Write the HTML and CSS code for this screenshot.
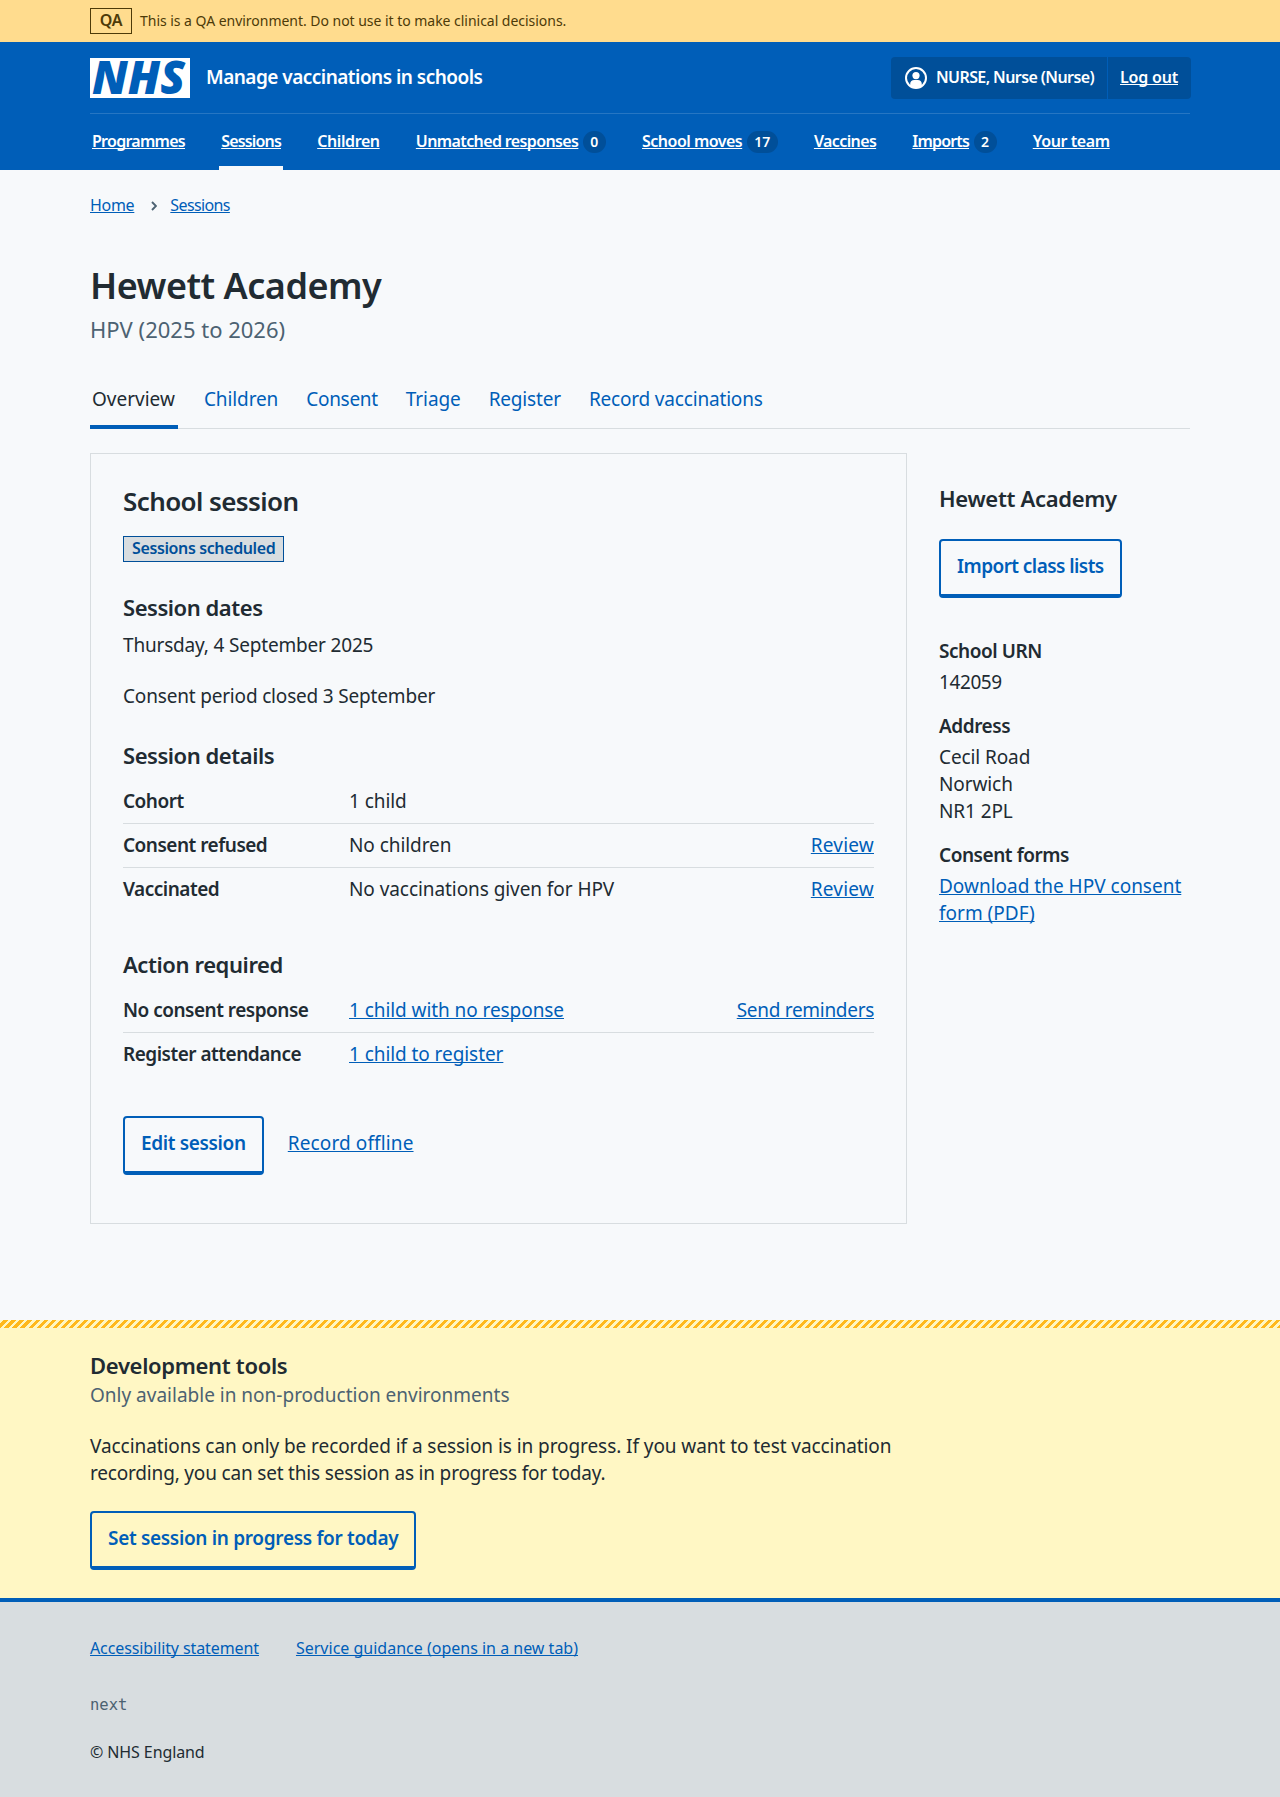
FILE: index.html
```html
<!DOCTYPE html>
<html lang="en">
<head>
<meta charset="utf-8">
<title>Hewett Academy – Manage vaccinations in schools</title>
<link rel="stylesheet" href="styles.css">
</head>
<body>
<div class="environment">
  <div class="container environment-inner">
    <strong class="environment-tag">QA</strong>
    <span>This is a QA environment. Do not use it to make clinical decisions.</span>
  </div>
</div>

<header class="header">
  <div class="container">
    <div class="header-top">
      <svg class="logo" width="100" height="40" viewBox="0 0 100 40" role="img" aria-label="NHS">
        <rect width="100" height="40" fill="#fff"/>
        <text class="logo-text" x="2" y="36.2" textLength="93" lengthAdjust="spacingAndGlyphs">NHS</text>
      </svg>
      <span class="service-name">Manage vaccinations in schools</span>
      <div class="account">
        <span class="account-item account-user">
          <svg width="22" height="22" viewBox="0 0 22 22" aria-hidden="true">
            <circle cx="11" cy="11" r="10" fill="none" stroke="#fff" stroke-width="2"/>
            <circle cx="11" cy="8.6" r="3.6" fill="#fff"/>
            <path d="M5.2 19.2v-2.400c0-2.200 1.800-3.900 4-3.900h3.600c2.200 0 4 1.700 4 3.900v2.400A10 10 0 0 1 11 21a10 10 0 0 1-5.800-1.800z" fill="#fff"/>
          </svg>
          <span>NURSE, Nurse (Nurse)</span>
        </span>
        <span class="account-item account-logout"><a href="#">Log out</a></span>
      </div>
    </div>
    <nav class="nav">
      <div class="nav-item"><a class="ls-7" href="#">Programmes</a></div>
      <div class="nav-item nav-item-current"><a class="ls-8" href="#">Sessions</a></div>
      <div class="nav-item"><a class="ls-4" href="#">Children</a></div>
      <div class="nav-item"><a class="ls-6" href="#">Unmatched responses</a><span class="count">0</span></div>
      <div class="nav-item"><a class="ls-5" href="#">School moves</a><span class="count">17</span></div>
      <div class="nav-item"><a class="ls-6" href="#">Vaccines</a></div>
      <div class="nav-item"><a class="ls-8" href="#">Imports</a><span class="count">2</span></div>
      <div class="nav-item"><a class="ls-4" href="#">Your team</a></div>
    </nav>
  </div>
</header>

<main class="container main">
  <nav class="breadcrumb">
    <a class="ls-3" href="#">Home</a>
    <svg width="6" height="10" viewBox="0 0 6 10" aria-hidden="true"><path d="M1 1l4 4-4 4" fill="none" stroke="#4c6272" stroke-width="1.900"/></svg>
    <a class="ls-6" href="#">Sessions</a>
  </nav>
  <h1 class="title">Hewett Academy</h1>
  <p class="title-caption">HPV (2025 to 2026)</p>

  <nav class="tabs">
    <a class="tab tab-current" href="#">Overview</a>
    <a class="tab ls-1" href="#">Children</a>
    <a class="tab ls-3" href="#">Consent</a>
    <a class="tab ls-1" href="#">Triage</a>
    <a class="tab ls-2" href="#">Register</a>
    <a class="tab ls-2" href="#">Record vaccinations</a>
  </nav>

  <div class="layout">
    <section class="card">
      <h2 class="card-title">School session</h2>
      <strong class="tag">Sessions scheduled</strong>

      <h3 class="heading heading-dates">Session dates</h3>
      <p class="date ls-2">Thursday, 4 September 2025</p>
      <p class="consent-period ls-2">Consent period closed 3 September</p>

      <h3 class="heading heading-details">Session details</h3>
      <dl class="summary">
        <div class="row"><dt>Cohort</dt><dd>1 child</dd></div>
        <div class="row"><dt>Consent refused</dt><dd>No children</dd><dd class="row-action"><a class="ls-up" href="#">Review</a></dd></div>
        <div class="row"><dt>Vaccinated</dt><dd>No vaccinations given for HPV</dd><dd class="row-action"><a class="ls-up" href="#">Review</a></dd></div>
      </dl>

      <h3 class="heading heading-actions">Action required</h3>
      <dl class="summary">
        <div class="row"><dt>No consent response</dt><dd><a href="#">1 child with no response</a></dd><dd class="row-action"><a class="ls-3" href="#">Send reminders</a></dd></div>
        <div class="row"><dt>Register attendance</dt><dd><a href="#">1 child to register</a></dd></div>
      </dl>

      <div class="button-group">
        <a class="button button-edit" href="#">Edit session</a>
        <a class="offline-link" href="#">Record offline</a>
      </div>
    </section>

    <aside class="side">
      <h2 class="heading ls-3">Hewett Academy</h2>
      <a class="button button-import" href="#">Import class lists</a>
      <dl class="facts">
        <dt>School URN</dt>
        <dd class="ls-4">142059</dd>
        <dt>Address</dt>
        <dd class="ls-1">Cecil Road<br>Norwich<br>NR1 2PL</dd>
        <dt>Consent forms</dt>
        <dd><a href="#">Download the HPV consent form (PDF)</a></dd>
      </dl>
    </aside>
  </div>
</main>

<section class="devtools">
  <div class="container">
    <h2 class="heading ls-3">Development tools</h2>
    <p class="devtools-caption">Only available in non-production environments</p>
    <p class="devtools-text">Vaccinations can only be recorded if a session is in progress. If you want to test vaccination <span class="ls-2">recording, you can set this session as in progress for today.</span></p>
    <a class="button button-progress" href="#">Set session in progress for today</a>
  </div>
</section>

<footer class="footer">
  <div class="container">
    <div class="footer-links">
      <a class="ls-1" href="#">Accessibility statement</a>
      <a href="#">Service guidance (opens in a new tab)</a>
    </div>
    <p class="version">next</p>
    <p class="copyright ls-1">© NHS England</p>
  </div>
</footer>
</body>
</html>
```
FILE: styles.css
```css
* { box-sizing: border-box; }

body {
  margin: 0;
  background: #f7f9fb;
  color: #212b32;
  font: 400 19px/27px "Noto Sans", "Open Sans", sans-serif;
}

h1, h2, h3, p, dl, dd { margin: 0; }

a {
  color: #005eb8;
  text-decoration: underline;
  text-decoration-thickness: 1px;
  text-decoration-skip-ink: none;
  text-underline-offset: 1px;
}

.container { width: 1100px; margin: 0 auto; }

/* Letter-spacing steps */
.ls-up { letter-spacing: 0.2px; }
.ls-1 { letter-spacing: -0.1px; }
.ls-2 { letter-spacing: -0.18px; }
.ls-3 { letter-spacing: -0.3px; }
.ls-4 { letter-spacing: -0.4px; }
.ls-5 { letter-spacing: -0.52px; }
.ls-6 { letter-spacing: -0.62px; }
.ls-7 { letter-spacing: -0.73px; }
.ls-8 { letter-spacing: -0.83px; }

/* Environment banner */
.environment { height: 42px; background: #ffdc8e; color: #4d3a08; }
.environment-inner { display: flex; align-items: center; gap: 8px; height: 42px; font-size: 14px; line-height: 20px; letter-spacing: -0.03px; }
.environment-tag {
  width: 42px;
  height: 26px;
  border: 1px solid #4d3a08;
  font-size: 16px;
  font-weight: 600;
  line-height: 23px;
  letter-spacing: -0.2px;
  text-align: center;
}

/* Header */
.header { height: 128px; background: #005eb8; color: #fff; }
.header a { color: #fff; }
.header-top { display: flex; align-items: center; height: 72px; border-bottom: 1px solid #2676c3; }
.logo { display: block; overflow: visible; }
.logo-text { font: italic 800 46.500px "Open Sans", sans-serif; fill: #005eb8; }
.service-name { margin-left: 16px; font-weight: 600; letter-spacing: -0.52px; }
.account {
  display: flex;
  margin-left: auto;
  margin-right: -1px;
  height: 42px;
  border-radius: 4px;
  background: #004f99;
  font-size: 16px;
  font-weight: 600;
  line-height: 40px;
}
.account-item { display: flex; align-items: center; }
.account-user { gap: 9px; padding: 0 13px 0 14px; letter-spacing: -0.6px; border-right: 1px solid #005eb8; }
.account-logout { padding: 0 13px 0 12px; letter-spacing: -0.2px; }
.account-item > span, .account-item > a { margin-top: -1px; }

.nav { display: flex; gap: 32.200px; height: 56px; font-size: 16px; font-weight: 600; line-height: 22px; }
.nav-item { display: flex; align-items: center; padding: 4px 2px 4px; }
.nav-item > a { margin-top: -2px; }
.nav-item-current { border-bottom: 4px solid #f7f9fb; padding-bottom: 0; }
.count {
  margin-left: 4.500px;
  padding: 0 7.500px;
  border-radius: 11px;
  background: #004f99;
  font-size: 14px;
  line-height: 22px;
}

/* Page heading */
.main { padding-top: 24px; padding-bottom: 96px; }
.breadcrumb { display: flex; align-items: center; height: 22px; font-size: 16px; line-height: 22px; }
.breadcrumb svg { margin: 2px 13px 0 17px; }
.title { margin-top: 48px; font-size: 36px; font-weight: 600; line-height: 44px; letter-spacing: -0.5px; }
.title-caption { margin-top: 5px; color: #4c6272; font-size: 22px; line-height: 33px; }

/* Secondary navigation */
.tabs { display: flex; gap: 24px; margin-top: 39px; box-shadow: inset 0 -1px #d8dde0; }
.tab { padding: 1px 2px 16px; text-decoration: none; }
.tab-current { padding-right: 3px; padding-bottom: 12px; border-bottom: 4px solid #005eb8; color: #212b32; }

.layout { display: grid; grid-template-columns: 817px 1fr; gap: 32px; margin-top: 24px; }

.heading { font-size: 22px; font-weight: 600; line-height: 31px; letter-spacing: -0.46px; }
.heading.ls-3 { letter-spacing: -0.32px; }

/* Session card */
.card { padding: 30px 32px 48px; border: 1px solid #d8dde0; }
.card-title { font-size: 26px; font-weight: 600; line-height: 34px; letter-spacing: -0.6px; }
.tag {
  display: block;
  width: fit-content;
  height: 26px;
  margin-top: 18px;
  padding: 0 8px;
  border: 1px solid #004f99;
  background: #d8dde0;
  color: #004f99;
  font-size: 16px;
  font-weight: 600;
  line-height: 23px;
  letter-spacing: -0.38px;
}
.heading-dates { margin-top: 30px; }
.date { margin-top: 9px; }
.consent-period { margin-top: 24px; }
.heading-details { margin-top: 30px; }
.heading-actions { margin-top: 37px; letter-spacing: -0.41px; }

.summary { padding-top: 9px; }
.row { display: flex; padding: 8px 0; border-bottom: 1px solid #d8dde0; }
.row:last-child { border-color: transparent; }
.row dt { width: 226px; font-weight: 600; letter-spacing: -0.5px; }
.row dd { letter-spacing: -0.07px; }
.row .row-action { margin-left: auto; }

.button {
  display: inline-block;
  padding: 12px 16px 14px;
  border: 2px solid #005eb8;
  border-bottom-width: 4px;
  border-radius: 4px;
  font-weight: 600;
  text-decoration: none;
}
.button-group { display: flex; align-items: center; gap: 24px; margin-top: 39px; }
.button-edit { letter-spacing: -0.35px; }
.offline-link { margin-top: -4px; letter-spacing: 0.12px; }

/* School details */
.side { padding-top: 30px; }
.button-import { margin-top: 25px; letter-spacing: -0.56px; }
.facts { margin-top: 22px; }
.facts dt { margin-top: 17px; font-weight: 600; letter-spacing: -0.45px; }
.facts dt:first-child { margin-top: 40px; }
.facts dd { margin-top: 4px; }

/* Development tools */
.devtools {
  height: 278px;
  padding-top: 30px;
  background: repeating-linear-gradient(135deg, #fff7c4 0 2.828px, #ffb81c 2.828px 5.657px) top / 100% 8px no-repeat #fff7c4;
}
.devtools-caption { margin-top: 1px; color: #4c6272; }
.devtools-text { width: 817px; margin-top: 24px; letter-spacing: -0.07px; }
.button-progress { margin-top: 24px; letter-spacing: -0.32px; }

/* Footer */
.footer { height: 199px; padding-top: 34px; border-top: 4px solid #005eb8; background: #d8dde0; font-size: 16px; line-height: 24px; }
.footer-links { display: flex; gap: 37px; }
.version { margin-top: 33px; color: #4c6272; font-family: "DejaVu Sans Mono", monospace; font-size: 15.500px; }
.copyright { margin-top: 23px; }
```
